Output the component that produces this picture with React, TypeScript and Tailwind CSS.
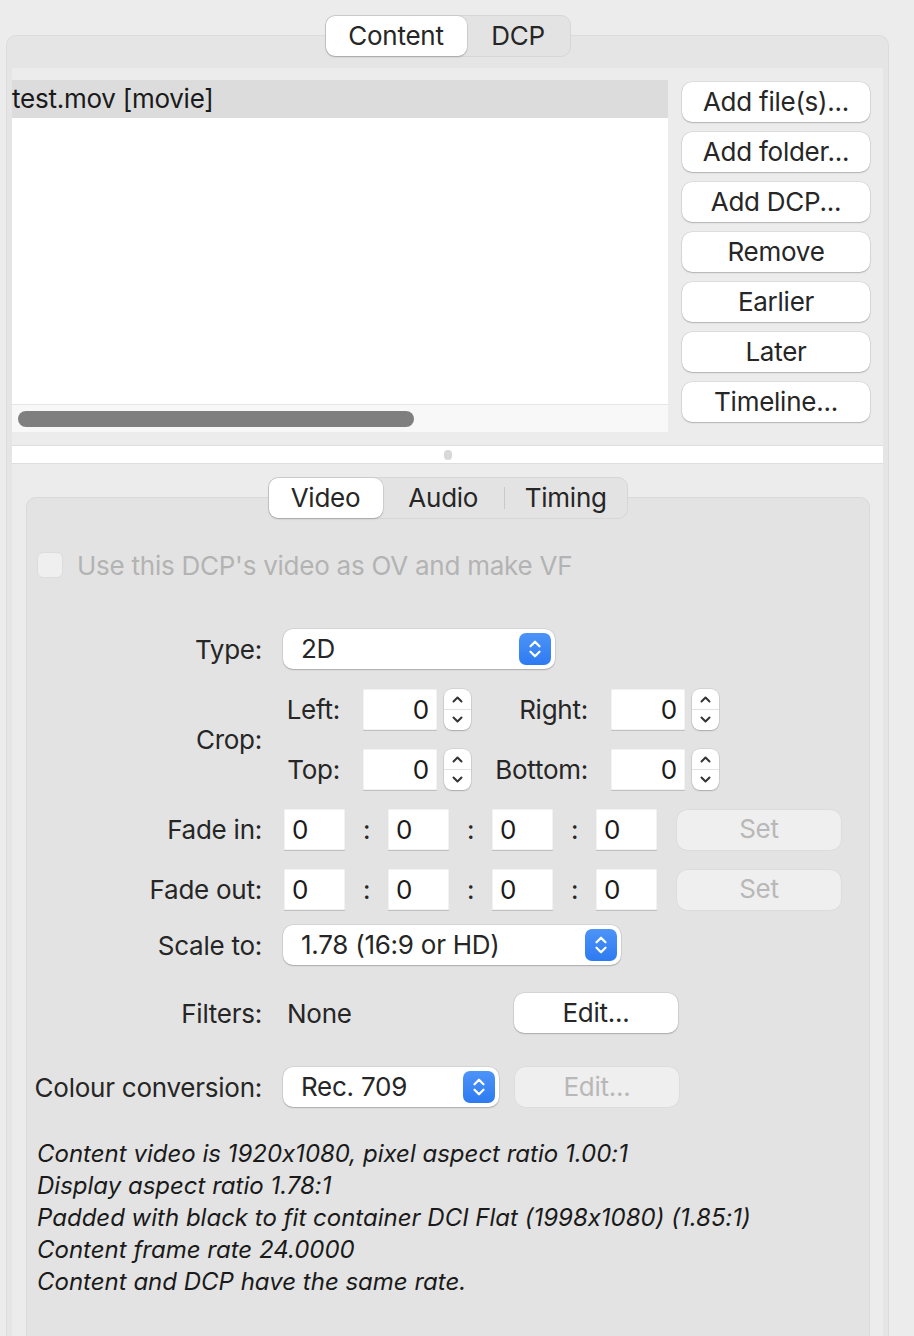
import React from 'react';

const font = "font-['Inter','Noto_Sans',sans-serif] tracking-[-0.25px] [font-variant-ligatures:no-contextual]";

const Up = ({ className = '' }: { className?: string }) => (
  <svg viewBox="0 0 12 8" className={className} fill="none" stroke="currentColor" strokeWidth="2" strokeLinecap="round" strokeLinejoin="round">
    <path d="M2 6.5 6 2.5l4 4" />
  </svg>
);

const Down = ({ className = '' }: { className?: string }) => (
  <svg viewBox="0 0 12 8" className={className} fill="none" stroke="currentColor" strokeWidth="2" strokeLinecap="round" strokeLinejoin="round">
    <path d="M2 1.5 6 5.5l4-4" />
  </svg>
);

const Button = ({ label, disabled, className = '' }: { label: string; disabled?: boolean; className?: string }) => (
  <div
    className={`flex h-[40px] items-center justify-center rounded-[10px] pb-[2px] text-[26px] ${
      disabled
        ? 'bg-[#efefef] text-[#b8b8b8] shadow-[0_0_0_0.5px_rgba(0,0,0,0.06)]'
        : 'bg-white text-[#262626] shadow-[0_0_0_0.5px_rgba(0,0,0,0.12),0_1px_1.5px_rgba(0,0,0,0.2)]'
    } ${className}`}
  >
    {label}
  </div>
);

const Select = ({ value, width }: { value: string; width: string }) => (
  <div className={`flex h-[40px] items-center justify-between rounded-[10px] bg-white pl-[18px] pr-[4px] text-[26px] text-[#262626] shadow-[0_0_0_0.5px_rgba(0,0,0,0.12),0_1px_1.5px_rgba(0,0,0,0.2)] ${width}`}>
    <span className="pb-[2px]">{value}</span>
    <div className="flex h-[32px] w-[32px] flex-col items-center justify-center gap-[2px] rounded-[7px] bg-gradient-to-b from-[#4d94f8] to-[#2d7af1] text-white">
      <Up className="h-[9px] w-[14px]" />
      <Down className="h-[9px] w-[14px]" />
    </div>
  </div>
);

const Field = ({ align, width }: { align: 'left' | 'right'; width: string }) => (
  <div
    className={`flex h-[41px] items-center bg-white text-[26px] text-[#1a1a1a] shadow-[inset_0_0_0_0.5px_rgba(0,0,0,0.1),0_1px_0_rgba(0,0,0,0.15)] ${width} ${
      align === 'right' ? 'justify-end pr-[8px]' : 'justify-start pl-[8px]'
    }`}
  >
    0
  </div>
);

const Stepper = () => (
  <div className="flex h-[41px] w-[27px] flex-col rounded-[8px] bg-white text-[#333] shadow-[0_0_0_0.5px_rgba(0,0,0,0.12),0_1px_1.5px_rgba(0,0,0,0.2)]">
    <div className="flex flex-1 items-center justify-center border-b border-[#e2e2e2]">
      <Up className="h-[8px] w-[13px]" />
    </div>
    <div className="flex flex-1 items-center justify-center">
      <Down className="h-[8px] w-[13px]" />
    </div>
  </div>
);

const Label = ({ text }: { text: string }) => (
  <div className="w-[235px] shrink-0 text-right text-[26px] text-[#262626]">{text}</div>
);

const Segmented = ({ items, width, selWidth }: { items: string[]; width: string; selWidth: string }) => (
  <div className={`relative z-10 flex h-[42px] items-center rounded-[10px] border border-[#d6d6d6] bg-[#e3e3e3] text-[26px] text-[#262626] ${width}`}>
    {items.map((item, i) => (
      <React.Fragment key={item}>
        {i > 1 && <div className="h-[22px] w-px bg-[#c9c9c9]" />}
        <div
          className={
            i === 0
              ? `flex h-[40px] items-center justify-center rounded-[9px] bg-white pb-[2px] shadow-[0_0_0_0.5px_rgba(0,0,0,0.1),0_1px_2px_rgba(0,0,0,0.2)] ${selWidth}`
              : 'flex flex-1 items-center justify-center pb-[2px]'
          }
        >
          {item}
        </div>
      </React.Fragment>
    ))}
  </div>
);

const buttons = ['Add file(s)...', 'Add folder...', 'Add DCP...', 'Remove', 'Earlier', 'Later', 'Timeline...'];

const info = [
  'Content video is 1920x1080, pixel aspect ratio 1.00:1',
  'Display aspect ratio 1.78:1',
  'Padded with black to fit container DCI Flat (1998x1080) (1.85:1)',
  'Content frame rate 24.0000',
  'Content and DCP have the same rate.',
];

const Colon = () => <div className="w-[43px] text-center text-[26px] text-[#262626]">:</div>;

const FadeRow = ({ label }: { label: string }) => (
  <div className="flex h-[41px] items-center">
    <Label text={label} />
    <div className="ml-[22px] flex items-center">
      <Field align="left" width="w-[61px]" />
      <Colon />
      <Field align="left" width="w-[61px]" />
      <Colon />
      <Field align="left" width="w-[61px]" />
      <Colon />
      <Field align="left" width="w-[61px]" />
      <Button label="Set" disabled className="ml-[20px] w-[164px]" />
    </div>
  </div>
);

export default function App() {
  return (
    <div className={`flex h-[1336px] w-[914px] flex-col overflow-hidden bg-[#ececec] ${font}`}>
      {/* outer tab box */}
      <div className="ml-[6px] mt-[15px] flex w-[883px] flex-col items-center">
        <Segmented items={['Content', 'DCP']} width="w-[246px]" selWidth="w-[141px]" />
      </div>
      <div className="-mt-[22px] ml-[6px] flex w-[883px] flex-1 flex-col rounded-t-[10px] border border-b-0 border-[#dcdcdc] bg-[#e5e5e5] px-[5px] pt-[32px]">
        <div className="flex flex-1 flex-col bg-[#ececec]">
          {/* content list + buttons */}
          <div className="flex pt-[12px]">
            <div className="flex h-[352px] w-[656px] flex-col bg-white">
              <div className="flex h-[38px] items-center bg-[#dcdcdc] pb-[2px] text-[26px] text-[#1a1a1a]">test.mov [movie]</div>
              <div className="flex-1" />
              <div className="flex h-[28px] items-center border-t border-[#e6e6e6] bg-[#f8f8f8] pl-[6px]">
                <div className="h-[16px] w-[396px] rounded-full bg-[#7f7f7f]" />
              </div>
            </div>
            <div className="ml-[14px] flex w-[188px] flex-col gap-[10px] pt-[2px]">
              {buttons.map((b) => (
                <Button key={b} label={b} />
              ))}
            </div>
          </div>

          {/* splitter */}
          <div className="mt-[13px] flex h-[19px] items-center justify-center border-y border-[#dedede] bg-white">
            <div className="h-[10px] w-[8px] rounded-full bg-[#d8d8d8]" />
          </div>

          {/* inner tab box */}
          <div className="mt-[13px] flex flex-col items-center">
            <Segmented items={['Video', 'Audio', 'Timing']} width="w-[360px]" selWidth="w-[114px]" />
          </div>
          <div className="-mt-[22px] ml-[14px] flex w-[844px] flex-1 flex-col rounded-t-[10px] border border-b-0 border-[#d9d9d9] bg-[#e3e3e3] pt-[54px]">
            <div className="flex h-[26px] items-center pl-[10px]">
              <div className="h-[26px] w-[26px] rounded-[6px] border border-[#dcdcdc] bg-[#efefef]" />
              <span className="ml-[14px] text-[26px] text-[#b3b3b3]">Use this DCP's video as OV and make VF</span>
            </div>

            <div className="mt-[51px] flex h-[40px] items-center">
              <Label text="Type:" />
              <div className="ml-[21px]">
                <Select value="2D" width="w-[272px]" />
              </div>
            </div>

            <div className="mt-[20px] flex h-[101px] items-center">
              <Label text="Crop:" />
              <div className="ml-[21px] flex flex-col gap-[19px]">
                {[
                  ['Left:', 'Right:'],
                  ['Top:', 'Bottom:'],
                ].map(([a, b]) => (
                  <div key={a} className="flex h-[41px] items-center">
                    <div className="w-[57px] text-right text-[26px] text-[#262626]">{a}</div>
                    <div className="ml-[23px]">
                      <Field align="right" width="w-[74px]" />
                    </div>
                    <div className="ml-[7px]">
                      <Stepper />
                    </div>
                    <div className="w-[117px] text-right text-[26px] text-[#262626]">{b}</div>
                    <div className="ml-[23px]">
                      <Field align="right" width="w-[74px]" />
                    </div>
                    <div className="ml-[7px]">
                      <Stepper />
                    </div>
                  </div>
                ))}
              </div>
            </div>

            <div className="mt-[19px]">
              <FadeRow label="Fade in:" />
            </div>
            <div className="mt-[19px]">
              <FadeRow label="Fade out:" />
            </div>

            <div className="mt-[15px] flex h-[40px] items-center">
              <Label text="Scale to:" />
              <div className="ml-[21px]">
                <Select value="1.78 (16:9 or HD)" width="w-[338px]" />
              </div>
            </div>

            <div className="mt-[28px] flex h-[40px] items-center">
              <Label text="Filters:" />
              <div className="ml-[25px] w-[227px] text-[26px] text-[#262626]">None</div>
              <Button label="Edit..." className="w-[164px]" />
            </div>

            <div className="mt-[34px] flex h-[40px] items-center">
              <Label text="Colour conversion:" />
              <div className="ml-[21px]">
                <Select value="Rec. 709" width="w-[216px]" />
              </div>
              <Button label="Edit..." disabled className="ml-[16px] w-[164px]" />
            </div>

            <div className="mt-[31px] flex flex-col pl-[10px] text-[24px] italic leading-[32px] tracking-normal text-[#1a1a1a]">
              {info.map((l) => (
                <div key={l}>{l}</div>
              ))}
            </div>
          </div>
        </div>
      </div>
    </div>
  );
}
